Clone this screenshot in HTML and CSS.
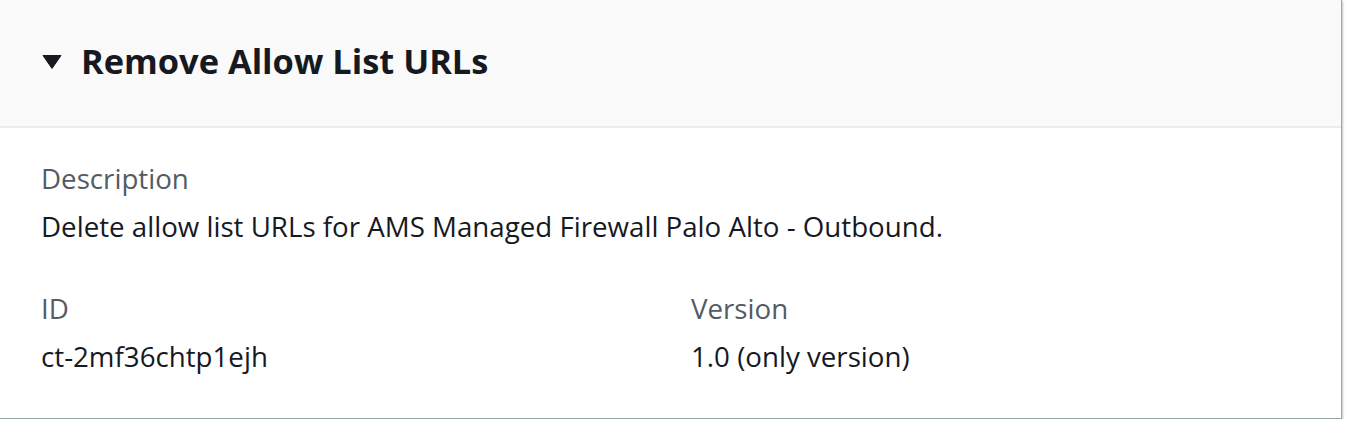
FILE: index.html
```html
<!DOCTYPE html>
<html>
<head>
<meta charset="utf-8">
<link rel="stylesheet" href="styles.css">
</head>
<body>
<div class="card">
  <div class="card-header">
    <svg class="caret" width="20" height="14" viewBox="0 0 20 14"><polygon points="1,0.5 19,0.5 10,13.5" fill="#16191f" stroke="#16191f" stroke-width="1" stroke-linejoin="round"/></svg>
    <h2 class="title">Remove Allow List URLs</h2>
  </div>
  <div class="card-body">
    <div class="field">
      <div class="label">Description</div>
      <div class="value">Delete allow list URLs for AMS Managed Firewall Palo Alto - Outbound.</div>
    </div>
    <div class="grid">
      <div class="field">
        <div class="label">ID</div>
        <div class="value">ct-2mf36chtp1ejh</div>
      </div>
      <div class="field">
        <div class="label">Version</div>
        <div class="value">1.0 (only version)</div>
      </div>
    </div>
  </div>
</div>
</body>
</html>
```
FILE: styles.css
```css
html, body {
  margin: 0;
  padding: 0;
  background: #ffffff;
}
body {
  font-family: "Open Sans", "Noto Sans", sans-serif;
  color: #16191f;
}
.card {
  width: 1342px;
  height: 419px;
  box-sizing: border-box;
  background: #ffffff;
  border-right: 1px solid #9aa6a8;
  border-bottom: 1px solid #9aa6a8;
  box-shadow: 1px 1px 2px 0 rgba(0, 28, 36, 0.25);
  display: flex;
  flex-direction: column;
}
.card-header {
  height: 128px;
  background: #fafafa;
  border-bottom: 2px solid #eaeded;
  box-sizing: border-box;
  display: flex;
  align-items: center;
  padding-left: 42px;
  gap: 19px;
}
.caret {
  display: block;
  margin-top: -2px;
}
.title {
  margin: 0;
  font-size: 34.4px;
  font-weight: 700;
  color: #16191f;
  margin-top: -6px;
}
.card-body {
  padding: 32px 40px 0 41px;
}
.field .label {
  font-size: 27.7px;
  color: #545b64;
  line-height: 36px;
}
.field .value {
  font-size: 27.7px;
  color: #16191f;
  line-height: 36px;
  margin-top: 12px;
}
.grid {
  display: grid;
  grid-template-columns: 650px 1fr;
  margin-top: 46px;
}
```
